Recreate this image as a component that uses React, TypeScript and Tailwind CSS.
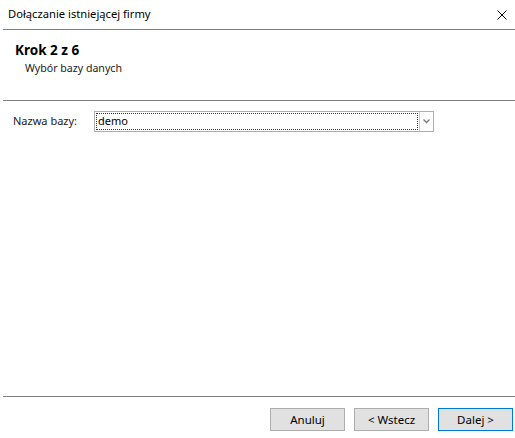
import React, { useState } from 'react';

const font = { fontFamily: '"Segoe UI", "Noto Sans", "Liberation Sans", sans-serif' };

function WizardButton({ label, primary }: { label: string; primary?: boolean }) {
  return (
    <button
      type="button"
      className={`w-[75px] h-[23px] bg-[#e1e1e1] text-[11.5px] text-[#000] border ${
        primary ? 'border-[#0078d7]' : 'border-[#adadad]'
      }`}
    >
      {label}
    </button>
  );
}

export default function App() {
  const [db] = useState('demo');

  return (
    <div className="w-[515px] h-[438px] bg-white flex flex-col text-black" style={font}>
      {/* title bar */}
      <div className="h-[29px] flex items-center justify-between pl-[8px] pr-[7px]">
        <span className="text-[11.2px]">Dołączanie istniejącej firmy</span>
        <svg width="10" height="10" viewBox="0 0 10 10" className="mr-[1px]">
          <path d="M0.5 0.5 L9.5 9.5 M9.5 0.5 L0.5 9.5" stroke="#000" strokeWidth="1" fill="none" />
        </svg>
      </div>
      <div className="ml-[3px] h-px bg-[#7f7f7f]" />

      {/* step header */}
      <div className="h-[70px] pl-[15px] pt-[12px]">
        <div className="text-[13.5px] font-bold leading-[16px]">Krok 2 z 6</div>
        <div className="pl-[10px] pt-[3px] text-[10.6px] leading-[14px] text-[#1a1a1a]">Wybór bazy danych</div>
      </div>
      <div className="ml-[3px] h-px bg-[#7f7f7f]" />

      {/* form */}
      <div className="flex-1 pt-[10px]">
        <div className="flex items-center h-[21px]">
          <span className="w-[94px] pl-[13px] text-[11px] text-[#1a1a1a]">Nazwa bazy:</span>
          <div className="w-[340px] h-[21px] flex border border-[#adadad] bg-white">
            <div className="flex-1 m-[1px] border border-dotted border-[#333] flex items-center pl-[1px] text-[11px]">
              {db}
            </div>
            <div className="w-[14px] border-l border-[#c8c8c8] flex items-center justify-center">
              <svg width="7" height="5" viewBox="0 0 7 5">
                <path d="M0.5 0.5 L3.5 3.5 L6.5 0.5" stroke="#7a7a7a" strokeWidth="1.3" fill="none" />
              </svg>
            </div>
          </div>
        </div>
      </div>

      <div className="ml-[3px] h-px bg-[#7f7f7f]" />
      {/* wizard buttons */}
      <div className="h-[41px] flex items-start justify-end gap-[9px] pt-[11px] pr-[2px]">
        <WizardButton label="Anuluj" />
        <WizardButton label="< Wstecz" />
        <WizardButton label="Dalej >" primary />
      </div>
    </div>
  );
}
